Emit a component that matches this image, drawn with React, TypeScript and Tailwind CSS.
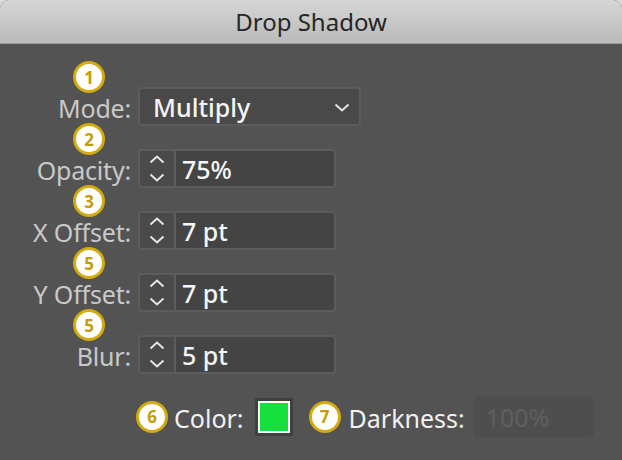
import type { ReactNode } from "react";

const font = { fontFamily: '"Noto Sans", "Open Sans", sans-serif' };

function Badge({ n, className = "" }: { n: string; className?: string }) {
  return (
    <div
      className={`flex h-8 w-8 items-center justify-center rounded-full border-[3px] border-[#d4ab0c] bg-white text-[17px] font-bold leading-none text-[#c49c08] ${className}`}
    >
      {n}
    </div>
  );
}

function Chevron({ up, className = "" }: { up?: boolean; className?: string }) {
  return (
    <svg width="16" height="9" viewBox="0 0 16 9" className={className}>
      <path
        d={up ? "M1.5 7.5 L8 1.5 L14.5 7.5" : "M1.5 1.5 L8 7.5 L14.5 1.5"}
        fill="none"
        stroke="#e6e6e6"
        strokeWidth="2"
      />
    </svg>
  );
}

function Field({ badge, label, children }: { badge: string; label: string; children: ReactNode }) {
  return (
    <div className="relative flex h-[39px] items-center">
      <Badge n={badge} className="absolute left-[73px] top-[-26px]" />
      <span className="w-[131px] pt-[4px] text-right text-[25px] tracking-[-0.2px] text-[#c9c9c9]">{label}</span>
      <div className="ml-[7px]">{children}</div>
    </div>
  );
}

function Stepper({ value }: { value: string }) {
  return (
    <div className="flex h-[39px] w-[198px] overflow-hidden rounded-[4px] border-2 border-[#5c5c5c] bg-[#5c5c5c]">
      <div className="flex w-[34px] flex-col items-center justify-center gap-[9px] bg-[#4a4a4a]">
        <Chevron up />
        <Chevron />
      </div>
      <div className="ml-[2px] flex flex-1 items-center bg-[#444444] pl-[6px] pt-[2px] text-[25px] font-medium text-[#f5f5f5]">
        {value}
      </div>
    </div>
  );
}

export default function App() {
  return (
    <div className="h-[460px] w-[622px] bg-[#dcdcdc]" style={font}>
      <div className="flex h-full flex-col overflow-hidden rounded-t-[9px] bg-[#535353]">
        <div className="flex h-[44px] items-center justify-center border-b border-[#9c9c9c] bg-gradient-to-b from-[#d6d6d6] to-[#bababa] text-[24px] text-[#262626]">
          Drop Shadow
        </div>
        <div className="flex flex-col gap-[23px] pt-[43px]">
          <Field badge="1" label="Mode:">
            <div className="flex h-[39px] w-[223px] items-center justify-between rounded-[4px] border-2 border-[#5c5c5c] bg-[#494949] pl-[13px] pr-[9px] pt-[2px] text-[25px] font-medium text-[#f5f5f5]">
              Multiply
              <Chevron />
            </div>
          </Field>
          <Field badge="2" label="Opacity:">
            <Stepper value="75%" />
          </Field>
          <Field badge="3" label="X Offset:">
            <Stepper value="7 pt" />
          </Field>
          <Field badge="5" label="Y Offset:">
            <Stepper value="7 pt" />
          </Field>
          <Field badge="5" label="Blur:">
            <Stepper value="5 pt" />
          </Field>
        </div>
        <div className="mt-[22px] flex h-[41px] items-center pl-[136px] text-[25px] text-[#f2f2f2]">
          <Badge n="6" />
          <span className="ml-[6px] pt-[4px]">Color:</span>
          <div className="ml-[11px] h-[38px] w-[38px] bg-[#404040] p-[3px]">
            <div className="h-full w-full border-2 border-white bg-[#15e03d]" />
          </div>
          <Badge n="7" className="ml-[16px]" />
          <span className="ml-[8px] pt-[4px]">Darkness:</span>
          <div className="ml-[9px] flex h-[41px] w-[120px] items-center rounded-[4px] bg-[#4e4e4e] pl-[12px] pt-[2px] text-[#5f5f5f]">
            100%
          </div>
        </div>
      </div>
    </div>
  );
}
